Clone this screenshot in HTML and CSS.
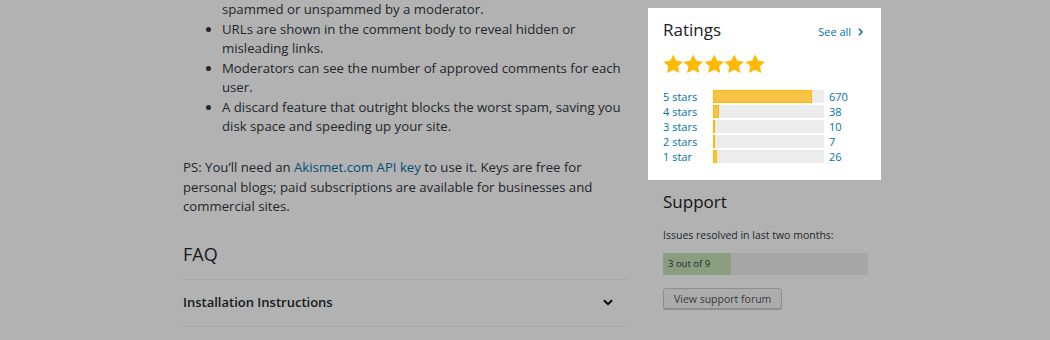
FILE: index.html
```html
<!DOCTYPE html>
<html lang="en">
<head>
    <meta charset="UTF-8">
    <meta name="viewport" content="width=device-width, initial-scale=1.0">
    <title>Akismet Anti-Spam</title>
    <link rel="stylesheet" href="styles.css">
</head>
<body>
    <div class="page">
        <main class="main">
            <ul class="features">
                <li class="cont">spammed or unspammed by a moderator.</li>
                <li>URLs are shown in the comment body to reveal hidden or misleading links.</li>
                <li>Moderators can see the number of approved comments for each user.</li>
                <li>A discard feature that outright blocks the worst spam, saving you disk space and speeding up your site.</li>
            </ul>
            <p class="note">PS: You’ll need an <a href="#">Akismet.com API key</a> to use it. Keys are free for personal blogs; paid subscriptions are available for businesses and commercial sites.</p>

            <h2 class="section-title">FAQ</h2>
            <div class="faq-item">
                <span>Installation Instructions</span>
                <svg class="chevron-down" width="10" height="7" viewBox="0 0 10 7"><path d="M1 1.2l4 4 4-4" fill="none" stroke="#000" stroke-width="2"/></svg>
            </div>
        </main>

        <aside class="sidebar">
            <section class="ratings">
                <div class="widget-head">
                    <h3>Ratings</h3>
                    <a href="#" class="see-all">See all
                        <svg width="5" height="8" viewBox="0 0 5 8"><path d="M1 0.8l3 3.2-3 3.2" fill="none" stroke="#0073aa" stroke-width="1.5"/></svg>
                    </a>
                </div>
                <div class="stars" id="stars"></div>
                <ul class="rating-list" id="rating-list"></ul>
            </section>

            <section class="support">
                <h3>Support</h3>
                <p class="support-text">Issues resolved in last two months:</p>
                <div class="resolved">
                    <div class="resolved-bar" style="width: 33.3%;"></div>
                    <span class="resolved-label">3 out of 9</span>
                </div>
                <button class="button">View support forum</button>
            </section>
        </aside>
    </div>
    <div class="dim"></div>

    <script>
        const ratings = [
            { label: '5 stars', count: 670 },
            { label: '4 stars', count: 38 },
            { label: '3 stars', count: 10 },
            { label: '2 stars', count: 7 },
            { label: '1 star', count: 26 }
        ];

        function loadStars() {
            const stars = document.getElementById('stars');
            const star = '<svg width="20.4" height="20" viewBox="0 0 20 20"><path d="M10 0.6l3 6.2 6.8.9-5 4.6 1.3 6.8L10 15.8 3.9 19.1l1.3-6.8-5-4.6 6.8-.9z" fill="#ffb900"/></svg>';
            stars.innerHTML = star.repeat(5);
        }

        function loadRatings() {
            const total = ratings.reduce((sum, r) => sum + r.count, 0);
            const list = document.getElementById('rating-list');
            ratings.forEach(r => {
                const li = document.createElement('li');
                const pct = (r.count / total * 100).toFixed(1);
                li.innerHTML = `
                    <a href="#" class="rating-label">${r.label}</a>
                    <span class="counter-back"><span class="counter-bar" style="width: ${pct}%;"></span></span>
                    <a href="#" class="rating-count">${r.count}</a>
                `;
                list.appendChild(li);
            });
        }

        window.onload = () => {
            loadStars();
            loadRatings();
        };
    </script>
</body>
</html>
```

FILE: styles.css
```css
body {
    font-family: "Open Sans", "Liberation Sans", sans-serif;
    margin: 0;
    padding: 0;
    background-color: #fff;
    color: #32373c;
    overflow: hidden;
}
a {
    color: #0073aa;
    text-decoration: none;
}
.page {
    display: flex;
    gap: 35px;
    padding-left: 183px;
}
.main {
    width: 445px;
    font-size: 13.2px;
    line-height: 19.5px;
}
.features {
    margin: 0;
    padding-left: 39px;
}
.features .cont {
    list-style: none;
}
.note {
    margin: 21.5px 0 0;
}
.section-title {
    font-size: 18px;
    line-height: 24px;
    font-weight: 400;
    color: #23282d;
    margin: 25px 0 13px;
}
.faq-item {
    display: flex;
    justify-content: space-between;
    align-items: center;
    height: 46px;
    padding-right: 15px;
    border-top: 1px solid #eee;
    border-bottom: 1px solid #eee;
    font-size: 13px;
    font-weight: 600;
    color: #23282d;
}
.sidebar {
    width: 205px;
}
.ratings {
    position: relative;
    z-index: 2;
    background: #fff;
    box-sizing: border-box;
    width: 233px;
    margin: 8px 0 0 -15px;
    padding: 11px 15px 16px;
}
.widget-head {
    display: flex;
    justify-content: space-between;
    align-items: baseline;
}
h3 {
    font-size: 17px;
    line-height: 22px;
    font-weight: 400;
    color: #1d2124;
    margin: 0;
}
.see-all {
    font-size: 11px;
    margin-right: 3px;
}
.see-all svg {
    margin-left: 4px;
}
.stars {
    display: flex;
    margin-top: 13px;
}
.stars svg {
    display: block;
}
.rating-list {
    list-style: none;
    margin: 14.5px 0 0;
    padding: 0;
}
.rating-list li {
    display: flex;
    align-items: center;
    height: 15.2px;
    font-size: 11px;
}
.rating-label {
    width: 50px;
}
.counter-back {
    width: 111px;
    height: 13px;
    background: #ececec;
    margin-right: 5px;
}
.counter-bar {
    display: block;
    box-sizing: border-box;
    height: 100%;
    background: #f8c346;
    border: 1px solid #ffb900;
}
.support h3 {
    margin-top: 11px;
}
.support-text {
    font-size: 10.5px;
    margin: 15px 0 11px;
}
.resolved {
    position: relative;
    height: 22px;
    background: #eee;
}
.resolved-bar {
    height: 100%;
    background: #c6e1b6;
}
.resolved-label {
    position: absolute;
    left: 5px;
    top: 0;
    line-height: 22px;
    font-size: 9.5px;
}
.button {
    font-family: inherit;
    font-size: 10.5px;
    color: #555;
    height: 21px;
    margin-top: 13px;
    padding: 0 10px;
    background: #f7f7f7;
    border: 1px solid #ccc;
    border-radius: 3px;
    box-shadow: 0 1px 0 #ccc;
}
.dim {
    position: fixed;
    inset: 0;
    z-index: 1;
    background: rgba(0, 0, 0, 0.3);
}
```
